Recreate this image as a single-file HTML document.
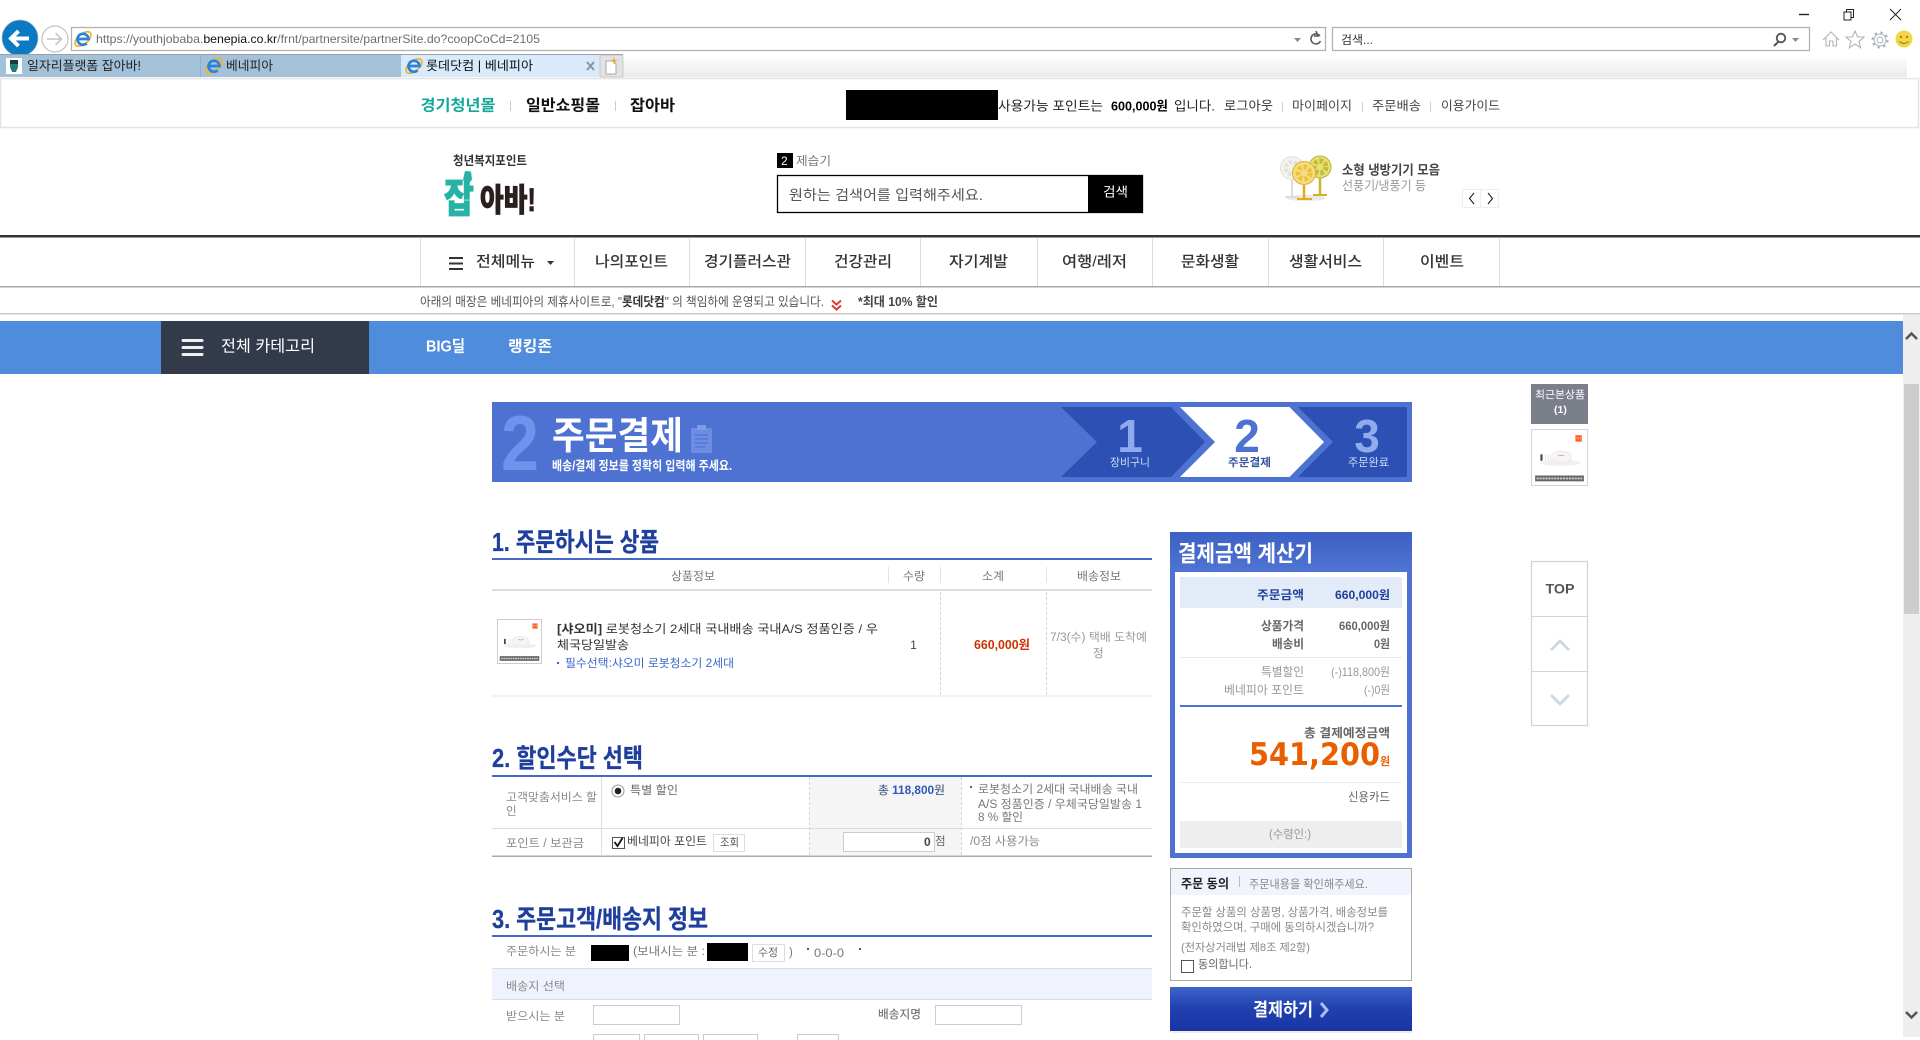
<!DOCTYPE html>
<html lang="ko"><head><meta charset="utf-8"><title>롯데닷컴 | 베네피아</title>
<style>
html,body{margin:0;padding:0;background:#fff;width:1920px;height:1040px;overflow:hidden}
svg{display:block;position:absolute;left:0;top:0}
text{font-family:"Liberation Sans","Noto Sans CJK KR",sans-serif;dominant-baseline:central;white-space:pre;transform:translateY(1px)}
</style></head><body>
<svg xmlns="http://www.w3.org/2000/svg" width="1920" height="1040" viewBox="0 0 1920 1040">
<defs>
<linearGradient id="tb" x1="0" y1="0" x2="0" y2="1"><stop offset="0" stop-color="#fff"/><stop offset="1" stop-color="#ebebeb"/></linearGradient>
<linearGradient id="hd" x1="0" y1="0" x2="0" y2="1"><stop offset="0" stop-color="#3c60c4"/><stop offset="1" stop-color="#4f74d3"/></linearGradient>
<linearGradient id="btn" x1="0" y1="0" x2="0" y2="1"><stop offset="0" stop-color="#3f65cb"/><stop offset=".45" stop-color="#2142b0"/><stop offset="1" stop-color="#1a34a5"/></linearGradient>
<g id="ie"><ellipse cx="0" cy="0" rx="9.500" ry="5" transform="rotate(-40)" fill="none" stroke="#f0b429" stroke-width="1.700"/><path d="M-5.500 0H5.500A5.500 5.500 0 1 0 3.600 4.400" fill="none" stroke="#2b83d6" stroke-width="2.700"/></g>
<g id="robot"><rect x="0" y="0" width="100" height="100" fill="#fff"/><rect x="80" y="8" width="12" height="12" fill="#ff5a1f"/><path d="M83 16v-5M86 16v-5M89 16v-5" stroke="#fff" stroke-width=".8"/><ellipse cx="52" cy="60" rx="38" ry="6" fill="#f0f0f0"/><ellipse cx="53" cy="49" rx="20" ry="11" fill="#f5f5f5" stroke="#e0e0e0"/><path d="M47 45q6 3 12 0" stroke="#e66" stroke-width="1.200" fill="none"/><rect x="14" y="44" width="4" height="12" fill="#444"/><path d="M22 45q4 5 0 10M27 44q5 6 0 12" stroke="#bcd7f0" fill="none"/><rect x="4" y="84" width="92" height="11" fill="#666"/><path d="M7 89.500H93" stroke="#ccc" stroke-width="3.500" stroke-dasharray="4 1.500"/></g>
</defs>

<!-- browser chrome -->
<rect x="0" y="0" width="1920" height="78" fill="#fff"/>
<path d="M1799 14.500h10" stroke="#222" stroke-width="1.400"/>
<rect x="1844" y="12" width="7" height="8" fill="#fff" stroke="#222"/><path d="M1846.500 12V9.500h7v8h-2.500" fill="none" stroke="#222"/>
<path d="M1890 9l11 11M1901 9l-11 11" stroke="#222" stroke-width="1"/>
<circle cx="20" cy="38" r="18" fill="#0a7ac4" stroke="#9fb6c6" stroke-width=".7"/>
<path d="M29 38.500H11M18.500 31L11 38.500L18.500 46" fill="none" stroke="#fff" stroke-width="4"/>
<circle cx="55" cy="39" r="13" fill="#fff" stroke="#c2c2c2" stroke-width="1.200"/>
<path d="M47 39h14M55.500 33l6 6l-6 6" fill="none" stroke="#c2c2c2" stroke-width="1.500"/>
<rect x="71.500" y="27.500" width="1254" height="23" fill="#fff" stroke="#b2b2b2" stroke-width="1.300"/>
<use href="#ie" x="83" y="39"/>
<text x="96" y="38" font-size="12" fill="#6e6e6e" textLength="444" lengthAdjust="spacingAndGlyphs">https://youthjobaba.<tspan fill="#111">benepia.co.kr</tspan>/frnt/partnersite/partnerSite.do?coopCoCd=2105</text>
<path d="M1294 38h7l-3.500 4z" fill="#888"/>
<path d="M1320 36a5 5 0 1 0 .5 5M1316 31l2 5h-4" fill="none" stroke="#555" stroke-width="1.500"/>
<rect x="1332.500" y="27.500" width="477" height="23" fill="#fff" stroke="#b2b2b2" stroke-width="1.300"/>
<text x="1341" y="39" font-size="12" fill="#333" textLength="32" lengthAdjust="spacingAndGlyphs">검색...</text>
<circle cx="1781" cy="38" r="4.300" fill="none" stroke="#555" stroke-width="1.800"/><path d="M1778 42l-4 4" stroke="#555" stroke-width="2"/>
<path d="M1792 38h7l-3.500 4z" fill="#888"/>
<path d="M1823 40l8-8l8 8M1826 38v8h3.500v-5h3.500v5h3.500v-8" fill="none" stroke="#aeb4b8" stroke-width="1.100"/>
<path d="M1855 31l2.700 6h6.300l-5 4.300l1.700 6.500l-5.700-3.600l-5.700 3.600l1.700-6.500l-5-4.300h6.300z" fill="none" stroke="#aeb4b8" stroke-width="1.100"/>
<circle cx="1880" cy="40" r="3" fill="none" stroke="#aeb4b8"/><circle cx="1880" cy="40" r="6" fill="none" stroke="#aeb4b8" stroke-width="1"/><circle cx="1880" cy="40" r="7.500" fill="none" stroke="#aeb4b8" stroke-width="2" stroke-dasharray="2.500 3.400"/>
<circle cx="1904" cy="39" r="8.500" fill="#f5d447"/><circle cx="1901" cy="37" r="1" fill="#7a6a1e"/><circle cx="1907" cy="37" r="1" fill="#7a6a1e"/><path d="M1899.500 41.500q4.500 4 9 0" fill="none" stroke="#8a7a22"/>

<rect x="0" y="54" width="623" height="1" fill="#9aa0a6"/>
<rect x="623" y="55" width="1284" height="22" fill="url(#tb)"/>
<rect x="0" y="55" width="401" height="22" fill="#a4c1da"/>
<rect x="200" y="55" width="1" height="22" fill="#93aec6"/>
<rect x="401" y="55" width="199" height="22" fill="#d8eafb"/>
<rect x="600" y="55" width="23" height="22" fill="#e2e2e2" stroke="#b5b5b5" stroke-width=".6"/>
<rect x="6" y="58" width="16" height="16" fill="#fff"/><path d="M10 60h8v7l-2 5h-4l-2-5z" fill="#1f7f78"/><path d="M10 60h8v4h-8z" fill="#1d3a3a"/>
<text x="27" y="65" font-size="12.500" fill="#222" textLength="114" lengthAdjust="spacingAndGlyphs">일자리플랫폼 잡아바!</text>
<use href="#ie" x="214" y="66"/>
<text x="226" y="65" font-size="12.500" fill="#222" textLength="47" lengthAdjust="spacingAndGlyphs">베네피아</text>
<use href="#ie" x="414" y="66"/>
<text x="426" y="65" font-size="12.500" fill="#111" textLength="107" lengthAdjust="spacingAndGlyphs">롯데닷컴 | 베네피아</text>
<path d="M587 62l7 8M594 62l-7 8" stroke="#8c959d" stroke-width="2"/>
<path d="M606 61h7l3 3v10h-10z" fill="#fff" stroke="#aaa"/>
<path d="M614 57l1 3l3 .5l-3 1l-1 3l-1-3l-3-1l3-.5z" fill="#f5a623"/>

<!-- top bar -->
<rect x="0.500" y="78.500" width="1918" height="49" fill="#fff" stroke="#e3e3e3" stroke-width="1.500"/>
<text x="420.500" y="105" font-size="15.500" font-weight="700" fill="#14a99b" textLength="75" lengthAdjust="spacingAndGlyphs">경기청년몰</text>
<rect x="510" y="101" width="1" height="10" fill="#ccc"/>
<text x="526" y="105" font-size="15.500" font-weight="700" fill="#111" textLength="74" lengthAdjust="spacingAndGlyphs">일반쇼핑몰</text>
<rect x="615" y="101" width="1" height="10" fill="#ccc"/>
<text x="630" y="105" font-size="15.500" font-weight="700" fill="#111" textLength="45" lengthAdjust="spacingAndGlyphs">잡아바</text>
<rect x="846" y="90" width="152" height="30" fill="#000"/>
<text x="998" y="105" font-size="13" fill="#222" textLength="105" lengthAdjust="spacingAndGlyphs">사용가능 포인트는</text>
<text x="1111" y="105" font-size="13" font-weight="700" fill="#000" textLength="57" lengthAdjust="spacingAndGlyphs">600,000원</text>
<text x="1174" y="105" font-size="13" fill="#222" textLength="41" lengthAdjust="spacingAndGlyphs">입니다.</text>
<text x="1224" y="105" font-size="12.500" fill="#333" textLength="49" lengthAdjust="spacingAndGlyphs">로그아웃</text>
<rect x="1282" y="102" width="1" height="10" fill="#ccc"/>
<text x="1292" y="105" font-size="12.500" fill="#444" textLength="60" lengthAdjust="spacingAndGlyphs">마이페이지</text>
<rect x="1362" y="102" width="1" height="10" fill="#ccc"/>
<text x="1372" y="105" font-size="12.500" fill="#444" textLength="49" lengthAdjust="spacingAndGlyphs">주문배송</text>
<rect x="1430" y="102" width="1" height="10" fill="#ccc"/>
<text x="1441" y="105" font-size="12.500" fill="#444" textLength="59" lengthAdjust="spacingAndGlyphs">이용가이드</text>

<!-- logo -->
<text x="453" y="160" font-size="12.500" font-weight="700" fill="#333" textLength="74" lengthAdjust="spacingAndGlyphs">청년복지포인트</text>
<path d="M465 171l6 .5l1 8l-3 4h-4l-2-4z" fill="#26b3a6"/>
<text x="444" y="198" font-size="40" font-weight="900" fill="#26b3a6" stroke="#26b3a6" stroke-width=".8" textLength="30" lengthAdjust="spacingAndGlyphs">잡</text>
<text x="480" y="199" font-size="32" font-weight="900" fill="#2a1f1d" stroke="#2a1f1d" stroke-width=".8" textLength="56" lengthAdjust="spacingAndGlyphs">아바!</text>

<!-- search -->
<rect x="777" y="153" width="16" height="15" fill="#000"/>
<text x="781" y="160" font-size="12" fill="#fff">2</text>
<text x="796" y="160" font-size="12" fill="#777" textLength="35" lengthAdjust="spacingAndGlyphs">제습기</text>
<rect x="777.500" y="175.500" width="365" height="37" fill="#fff" stroke="#000" stroke-width="1.300"/>
<rect x="1088" y="175" width="55" height="38" fill="#000"/>
<text x="789" y="194" font-size="14" fill="#555" textLength="194" lengthAdjust="spacingAndGlyphs">원하는 검색어를 입력해주세요.</text>
<text x="1103" y="191" font-size="13" fill="#fff" textLength="25" lengthAdjust="spacingAndGlyphs">검색</text>

<!-- fans -->
<ellipse cx="1306" cy="198" rx="20" ry="3" fill="#e9e9e9"/>
<circle cx="1292" cy="168" r="11.500" fill="#f3f3ee" stroke="#dedede"/><circle cx="1292" cy="168" r="6" fill="none" stroke="#e2e2dc" stroke-width="4" stroke-dasharray="3 2"/><path d="M1292 180v16" stroke="#ddd" stroke-width="2"/><path d="M1285 197h14" stroke="#ddd" stroke-width="2"/>
<circle cx="1320" cy="167" r="11" fill="#e4e07a" stroke="#b8b53a"/><circle cx="1320" cy="167" r="6" fill="none" stroke="#c4bd30" stroke-width="5" stroke-dasharray="3.500 2"/><path d="M1320 178v17" stroke="#c9b42a" stroke-width="2.500"/><path d="M1313 195h14" stroke="#c9b42a" stroke-width="2"/>
<circle cx="1304" cy="173" r="11.500" fill="#f6dc84" stroke="#e0b030"/><circle cx="1304" cy="173" r="6" fill="none" stroke="#eec23a" stroke-width="5" stroke-dasharray="3.500 2"/><path d="M1304 185v14" stroke="#e2ac1e" stroke-width="2.500"/><path d="M1297 199h15" stroke="#e2ac1e" stroke-width="2"/>
<text x="1342" y="169" font-size="13" font-weight="700" fill="#444" textLength="98" lengthAdjust="spacingAndGlyphs">소형 냉방기기 모음</text>
<text x="1342" y="185" font-size="12.500" fill="#999" textLength="84" lengthAdjust="spacingAndGlyphs">선풍기/냉풍기 등</text>
<rect x="1462.500" y="189.500" width="36" height="18" fill="#fff" stroke="#eee"/><rect x="1480" y="190" width="1" height="17" fill="#eee"/>
<path d="M1474 193l-4.500 5.500l4.500 5.500M1488 193l4.500 5.500l-4.500 5.500" fill="none" stroke="#222" stroke-width="1.100"/>

<!-- nav -->
<rect x="0" y="235" width="1920" height="2.500" fill="#333"/>
<rect x="0" y="286" width="1920" height="1.500" fill="#aaa"/>
<g fill="#ddd"><rect x="420" y="238" width="1" height="48"/><rect x="574" y="238" width="1" height="48"/><rect x="689" y="238" width="1" height="48"/><rect x="805" y="238" width="1" height="48"/><rect x="920" y="238" width="1" height="48"/><rect x="1037" y="238" width="1" height="48"/><rect x="1152" y="238" width="1" height="48"/><rect x="1268" y="238" width="1" height="48"/><rect x="1383" y="238" width="1" height="48"/><rect x="1499" y="238" width="1" height="48"/></g>
<path d="M449 258h14M449 263.500h14M449 269h14" stroke="#333" stroke-width="2"/>
<text x="476" y="261" font-size="15" font-weight="500" fill="#333" textLength="59" lengthAdjust="spacingAndGlyphs">전체메뉴</text>
<path d="M547 261h7l-3.500 4z" fill="#333"/>
<g font-size="15" font-weight="500" fill="#333">
<text x="595" y="261" textLength="73" lengthAdjust="spacingAndGlyphs">나의포인트</text>
<text x="704" y="261" textLength="87" lengthAdjust="spacingAndGlyphs">경기플러스관</text>
<text x="834" y="261" textLength="58" lengthAdjust="spacingAndGlyphs">건강관리</text>
<text x="949" y="261" textLength="59" lengthAdjust="spacingAndGlyphs">자기계발</text>
<text x="1062" y="261" textLength="65" lengthAdjust="spacingAndGlyphs">여행/레저</text>
<text x="1181" y="261" textLength="58" lengthAdjust="spacingAndGlyphs">문화생활</text>
<text x="1289" y="261" textLength="73" lengthAdjust="spacingAndGlyphs">생활서비스</text>
<text x="1420" y="261" textLength="44" lengthAdjust="spacingAndGlyphs">이벤트</text>
</g>

<!-- notice -->
<text x="420" y="301" font-size="12.500" fill="#555" textLength="404" lengthAdjust="spacingAndGlyphs">아래의 매장은 베네피아의 제휴사이트로, "<tspan font-weight="700" fill="#333">롯데닷컴</tspan>" 의 책임하에 운영되고 있습니다.</text>
<path d="M832 300.500l4.500 4l4.500-4M832 305.500l4.500 4l4.500-4" fill="none" stroke="#e03a2f" stroke-width="2"/>
<text x="858" y="301" font-size="12.500" font-weight="700" fill="#444" textLength="80" lengthAdjust="spacingAndGlyphs">*최대 10% 할인</text>
<rect x="0" y="313" width="1920" height="1.500" fill="#cfc8c0"/>

<!-- category bar -->
<rect x="0" y="321" width="1903" height="53" fill="#4f8cdc"/>
<rect x="161" y="321" width="208" height="53" fill="#333a4a"/>
<path d="M183 340.500h19M183 347.500h19M183 354.500h19" stroke="#eef0f2" stroke-width="3" stroke-linecap="round"/>
<text x="221" y="346" font-size="16" fill="#fff" textLength="94" lengthAdjust="spacingAndGlyphs">전체 카테고리</text>
<text x="426" y="346" font-size="16" font-weight="700" fill="#fff" textLength="39" lengthAdjust="spacingAndGlyphs">BIG딜</text>
<text x="508" y="346" font-size="15.500" font-weight="700" fill="#fff" textLength="44" lengthAdjust="spacingAndGlyphs">랭킹존</text>

<!-- scrollbar -->
<rect x="1903" y="315" width="17" height="722" fill="#eeeeee"/>
<rect x="1904" y="384" width="15" height="230" fill="#cdcdcd"/>
<path d="M1906 339l5.500-5.500l5.500 5.500" fill="none" stroke="#555" stroke-width="2.500"/>
<path d="M1906 1012l5.500 5.500l5.500-5.500" fill="none" stroke="#555" stroke-width="2.500"/>

<!-- order banner -->
<rect x="492" y="402" width="920" height="80" fill="#4d72d1"/>
<text x="501" y="442" font-size="78" font-weight="700" fill="#6f92ec" textLength="38" lengthAdjust="spacingAndGlyphs">2</text>
<text x="552" y="436" font-size="38" font-weight="700" fill="#fff" textLength="131" lengthAdjust="spacingAndGlyphs">주문결제</text>
<rect x="691" y="428" width="21" height="25" rx="1" fill="#6d8de2"/><rect x="697" y="425" width="9" height="5" fill="#7f9ce8"/><path d="M695 435h13M695 439h13M695 443h13M695 447h10" stroke="#4d72d1" stroke-width="1.200"/>
<text x="552" y="465" font-size="12.500" font-weight="700" fill="#fff" textLength="180" lengthAdjust="spacingAndGlyphs">배송/결제 정보를 정확히 입력해 주세요.</text>
<path d="M1061 407H1171L1205 442L1171 477H1061L1097 442Z" fill="#2c50b3"/>
<path d="M1180 407H1289.500L1324 442L1289.500 477H1180L1215 442Z" fill="#fff"/>
<path d="M1298 407H1407V477H1298L1333 442Z" fill="#2c50b3"/>
<text x="1130" y="435" font-size="46" font-weight="700" fill="#8fabee" text-anchor="middle">1</text>
<text x="1247" y="435" font-size="46" font-weight="700" fill="#4d72d1" text-anchor="middle">2</text>
<text x="1367" y="435" font-size="46" font-weight="700" fill="#8fabee" text-anchor="middle">3</text>
<text x="1110" y="462" font-size="11" fill="#cfdcf8" textLength="40" lengthAdjust="spacingAndGlyphs">장비구니</text>
<text x="1228" y="462" font-size="11" font-weight="700" fill="#33539f" textLength="43" lengthAdjust="spacingAndGlyphs">주문결제</text>
<text x="1348" y="462" font-size="11" fill="#cfdcf8" textLength="41" lengthAdjust="spacingAndGlyphs">주문완료</text>

<!-- section 1 -->
<text x="492" y="542" font-size="25.500" font-weight="700" fill="#1f3f9c" stroke="#1f3f9c" stroke-width=".3" textLength="167" lengthAdjust="spacingAndGlyphs">1. 주문하시는 상품</text>
<rect x="492" y="558" width="660" height="2" fill="#4668c8"/>
<g font-size="11.500" fill="#777">
<text x="671" y="576" textLength="44" lengthAdjust="spacingAndGlyphs">상품정보</text>
<text x="903" y="576" textLength="22" lengthAdjust="spacingAndGlyphs">수량</text>
<text x="982" y="576" textLength="22" lengthAdjust="spacingAndGlyphs">소계</text>
<text x="1077" y="576" textLength="44" lengthAdjust="spacingAndGlyphs">배송정보</text>
</g>
<g fill="#e2e2e2"><rect x="888" y="567" width="1" height="16"/><rect x="940" y="567" width="1" height="16"/><rect x="1046" y="567" width="1" height="16"/></g>
<rect x="492" y="589" width="660" height="2" fill="#dedede"/>
<path d="M940.500 592V695M1046.500 592V695" stroke="#d5d5d5" stroke-dasharray="3 2"/>
<rect x="492" y="695.500" width="660" height="1" fill="#e5e5e5"/>
<rect x="497.500" y="619.500" width="44" height="44" fill="#fff" stroke="#ccc"/>
<svg x="498" y="620" width="43" height="43" viewBox="0 0 100 100"><use href="#robot"/></svg>
<text x="557" y="628" font-size="12" fill="#333" textLength="321" lengthAdjust="spacingAndGlyphs"><tspan font-weight="700">[샤오미]</tspan> 로봇청소기 2세대 국내배송 국내A/S 정품인증 / 우</text>
<text x="557" y="644" font-size="12" fill="#333" textLength="72" lengthAdjust="spacingAndGlyphs">체국당일발송</text>
<rect x="557" y="662" width="2" height="2" fill="#3a66d0"/>
<text x="565" y="663" font-size="11.500" fill="#3a66d0" textLength="169" lengthAdjust="spacingAndGlyphs">필수선택:샤오미 로봇청소기 2세대</text>
<text x="913.500" y="644" font-size="12" fill="#444" text-anchor="middle">1</text>
<text x="974" y="644" font-size="12.500" font-weight="700" fill="#cc3300" textLength="56" lengthAdjust="spacingAndGlyphs">660,000원</text>
<text x="1050" y="637" font-size="11.500" fill="#999" textLength="97" lengthAdjust="spacingAndGlyphs">7/3(수) 택배 도착예</text>
<text x="1093" y="653" font-size="11.500" fill="#999">정</text>

<!-- section 2 -->
<text x="492" y="758" font-size="25.500" font-weight="700" fill="#1f3f9c" stroke="#1f3f9c" stroke-width=".3" textLength="151" lengthAdjust="spacingAndGlyphs">2. 할인수단 선택</text>
<rect x="492" y="775" width="660" height="2" fill="#4668c8"/>
<rect x="810" y="777" width="151" height="78" fill="#f5f5f5"/>
<rect x="492" y="828" width="660" height="1" fill="#ddd"/>
<rect x="492" y="855.500" width="660" height="1.500" fill="#aaa"/>
<rect x="601" y="777" width="1" height="79" fill="#ddd"/>
<path d="M809.500 777V855M961.500 777V855" stroke="#d5d5d5" stroke-dasharray="3 2"/>
<text x="506" y="797" font-size="11.500" fill="#888" textLength="91" lengthAdjust="spacingAndGlyphs">고객맞춤서비스 할</text>
<text x="506" y="811" font-size="11.500" fill="#888">인</text>
<circle cx="618" cy="791" r="6" fill="#fff" stroke="#999"/><circle cx="618" cy="791" r="3.300" fill="#222"/>
<text x="630" y="790" font-size="11.500" fill="#666" textLength="48" lengthAdjust="spacingAndGlyphs">특별 할인</text>
<text x="878" y="790" font-size="11.500" font-weight="500" fill="#5a6a8c" textLength="67" lengthAdjust="spacingAndGlyphs">총 <tspan fill="#2f57bb" font-weight="700">118,800</tspan>원</text>
<rect x="970" y="786" width="2" height="2" fill="#666"/>
<text x="978" y="789" font-size="11.500" fill="#777" textLength="160" lengthAdjust="spacingAndGlyphs">로봇청소기 2세대 국내배송 국내</text>
<text x="978" y="804" font-size="11.500" fill="#777" textLength="164" lengthAdjust="spacingAndGlyphs">A/S 정품인증 / 우체국당일발송 1</text>
<text x="978" y="817" font-size="11.500" fill="#777" textLength="45" lengthAdjust="spacingAndGlyphs">8 % 할인</text>
<text x="506" y="843" font-size="11.500" fill="#888" textLength="78" lengthAdjust="spacingAndGlyphs">포인트 / 보관금</text>
<rect x="612.500" y="837.500" width="12" height="11" fill="#fff" stroke="#555"/>
<path d="M614.500 842l3 4l5-8" fill="none" stroke="#111" stroke-width="1.800"/>
<text x="627" y="841" font-size="11.500" fill="#444" textLength="80" lengthAdjust="spacingAndGlyphs">베네피아 포인트</text>
<rect x="713.500" y="834.500" width="31" height="17" fill="#fff" stroke="#ddd"/>
<text x="720" y="842" font-size="11" fill="#555" textLength="19" lengthAdjust="spacingAndGlyphs">조회</text>
<rect x="843.500" y="832.500" width="91" height="19" fill="#fff" stroke="#ccc"/>
<text x="924" y="841" font-size="12" font-weight="700" fill="#444">0</text>
<text x="935" y="841" font-size="11.500" fill="#666">점</text>
<text x="970" y="841" font-size="11.500" fill="#888" textLength="70" lengthAdjust="spacingAndGlyphs">/0점 사용가능</text>

<!-- section 3 -->
<text x="492" y="919" font-size="25.500" font-weight="700" fill="#1f3f9c" stroke="#1f3f9c" stroke-width=".3" textLength="216" lengthAdjust="spacingAndGlyphs">3. 주문고객/배송지 정보</text>
<rect x="492" y="935" width="660" height="2" fill="#4668c8"/>
<text x="506" y="951" font-size="11.500" fill="#888" textLength="70" lengthAdjust="spacingAndGlyphs">주문하시는 분</text>
<rect x="591" y="945" width="38" height="16" fill="#000"/>
<text x="633" y="951" font-size="11.500" fill="#777" textLength="72" lengthAdjust="spacingAndGlyphs">(보내시는 분 :</text>
<rect x="707" y="943" width="41" height="18" fill="#000"/>
<rect x="752.500" y="944.500" width="32" height="17" fill="#fff" stroke="#ddd"/>
<text x="758" y="952" font-size="11" fill="#666" textLength="20" lengthAdjust="spacingAndGlyphs">수정</text>
<text x="789" y="952" font-size="11.500" fill="#777">)</text>
<rect x="807" y="948" width="2" height="2" fill="#555"/>
<text x="814" y="952" font-size="12" fill="#777" textLength="30" lengthAdjust="spacingAndGlyphs">0-0-0</text>
<rect x="859" y="948" width="2" height="2" fill="#555"/>
<rect x="492" y="968" width="660" height="32" fill="#f0f3fd"/>
<rect x="492" y="968" width="660" height="1" fill="#d3ddf2"/><rect x="492" y="999" width="660" height="1" fill="#d3ddf2"/>
<text x="506" y="986" font-size="11.500" fill="#888" textLength="59" lengthAdjust="spacingAndGlyphs">배송지 선택</text>
<text x="506" y="1016" font-size="11.500" fill="#888" textLength="59" lengthAdjust="spacingAndGlyphs">받으시는 분</text>
<rect x="593.500" y="1005.500" width="86" height="19" fill="#fff" stroke="#ccc"/>
<text x="878" y="1014" font-size="11.500" font-weight="500" fill="#777" textLength="43" lengthAdjust="spacingAndGlyphs">배송지명</text>
<rect x="935.500" y="1005.500" width="86" height="19" fill="#fff" stroke="#ccc"/>
<g fill="#fff" stroke="#ccc"><rect x="593.500" y="1034.500" width="46" height="10"/><rect x="644.500" y="1034.500" width="54" height="10"/><rect x="703.500" y="1034.500" width="54" height="10"/><rect x="797.500" y="1034.500" width="41" height="10"/></g>

<!-- calculator -->
<rect x="1170" y="532" width="242" height="326" fill="#4e72d2"/>
<rect x="1170" y="532" width="242" height="40" fill="url(#hd)"/>
<text x="1178" y="553" font-size="22.500" font-weight="700" fill="#fff" textLength="135" lengthAdjust="spacingAndGlyphs">결제금액 계산기</text>
<rect x="1175" y="572" width="232" height="281" fill="#fff"/>
<rect x="1180" y="577" width="222" height="31" fill="#e3eaf8"/>
<text x="1257" y="594" font-size="12" font-weight="700" fill="#1f3f9c" textLength="47" lengthAdjust="spacingAndGlyphs">주문금액</text>
<text x="1335" y="594" font-size="12" font-weight="700" fill="#1f3f9c" textLength="55" lengthAdjust="spacingAndGlyphs">660,000원</text>
<text x="1261" y="625" font-size="12" font-weight="700" fill="#666" textLength="43" lengthAdjust="spacingAndGlyphs">상품가격</text>
<text x="1339" y="625" font-size="12" font-weight="700" fill="#666" textLength="51" lengthAdjust="spacingAndGlyphs">660,000원</text>
<text x="1272" y="643" font-size="12" font-weight="700" fill="#666" textLength="32" lengthAdjust="spacingAndGlyphs">배송비</text>
<text x="1374" y="643" font-size="12" font-weight="700" fill="#666" textLength="16" lengthAdjust="spacingAndGlyphs">0원</text>
<rect x="1180" y="657" width="222" height="1" fill="#e8e8e8"/>
<text x="1261" y="671" font-size="12" fill="#999" textLength="43" lengthAdjust="spacingAndGlyphs">특별할인</text>
<text x="1331" y="671" font-size="12" fill="#999" textLength="59" lengthAdjust="spacingAndGlyphs">(-)118,800원</text>
<text x="1224" y="689" font-size="12" fill="#999" textLength="80" lengthAdjust="spacingAndGlyphs">베네피아 포인트</text>
<text x="1364" y="689" font-size="12" fill="#999" textLength="26" lengthAdjust="spacingAndGlyphs">(-)0원</text>
<rect x="1180" y="705" width="222" height="2" fill="#4e72d2"/>
<text x="1304" y="732" font-size="12" font-weight="700" fill="#666" textLength="86" lengthAdjust="spacingAndGlyphs">총 결제예정금액</text>
<text x="1249" y="754" font-size="31" font-weight="700" fill="#e95f00" textLength="131" lengthAdjust="spacingAndGlyphs" style="font-family:'DejaVu Sans',sans-serif">541,200</text>
<text x="1380" y="761" font-size="11" font-weight="700" fill="#e95f00">원</text>
<rect x="1180" y="782" width="222" height="1" fill="#eee"/>
<text x="1348" y="796" font-size="12" fill="#666" textLength="42" lengthAdjust="spacingAndGlyphs">신용카드</text>
<rect x="1180" y="821" width="222" height="27" fill="#eeeeee"/>
<text x="1269" y="834" font-size="11.500" fill="#999" textLength="42" lengthAdjust="spacingAndGlyphs">(수령인:)</text>

<!-- agreement -->
<rect x="1170.500" y="868.500" width="241" height="112" fill="#fff" stroke="#aaa"/>
<rect x="1171" y="869" width="240" height="26" fill="#f2f4fd"/>
<text x="1181" y="883" font-size="12.500" font-weight="700" fill="#222" textLength="48" lengthAdjust="spacingAndGlyphs">주문 동의</text>
<rect x="1239" y="876" width="1" height="11" fill="#bbb"/>
<text x="1249" y="884" font-size="11.500" fill="#888" textLength="119" lengthAdjust="spacingAndGlyphs">주문내용을 확인해주세요.</text>
<text x="1181" y="912" font-size="11.500" fill="#888" textLength="207" lengthAdjust="spacingAndGlyphs">주문할 상품의 상품명, 상품가격, 배송정보를</text>
<text x="1181" y="927" font-size="11.500" fill="#888" textLength="193" lengthAdjust="spacingAndGlyphs">확인하였으며, 구매에 동의하시겠습니까?</text>
<text x="1181" y="947" font-size="11" fill="#888" textLength="129" lengthAdjust="spacingAndGlyphs">(전자상거래법 제8조 제2항)</text>
<rect x="1181.500" y="960.500" width="12" height="12" fill="#fff" stroke="#555"/>
<text x="1198" y="964" font-size="11.500" fill="#666" textLength="54" lengthAdjust="spacingAndGlyphs">동의합니다.</text>

<rect x="1170" y="987" width="242" height="44" fill="url(#btn)"/>
<rect x="1170" y="1031" width="242" height="2" fill="#eee"/>
<text x="1253" y="1009" font-size="18" font-weight="700" fill="#fff" textLength="60" lengthAdjust="spacingAndGlyphs">결제하기</text>
<path d="M1321 1003l6 7l-6 7" fill="none" stroke="#a8bdf0" stroke-width="3"/>

<!-- right rail -->
<rect x="1531" y="384" width="57" height="40" fill="#7a7f8a"/>
<text x="1535" y="394" font-size="10.500" fill="#fff" textLength="50" lengthAdjust="spacingAndGlyphs">최근본상품</text>
<text x="1554" y="409" font-size="10.500" font-weight="700" fill="#fff">(1)</text>
<rect x="1531.500" y="429.500" width="56" height="56" fill="#fff" stroke="#cfd6dc"/>
<svg x="1533" y="431" width="53" height="53" viewBox="0 0 100 100"><use href="#robot"/></svg>
<rect x="1531.500" y="561.500" width="56" height="164" fill="#fff" stroke="#ccd6dc" stroke-width="1.300"/>
<rect x="1531" y="616" width="57" height="1" fill="#ccd6dc"/><rect x="1531" y="671" width="57" height="1" fill="#ccd6dc"/>
<text x="1545.500" y="588" font-size="13.500" font-weight="700" fill="#555" textLength="29" lengthAdjust="spacingAndGlyphs">TOP</text>
<path d="M1551 650l9-9l9 9" fill="none" stroke="#ccd8de" stroke-width="2.800"/>
<path d="M1551 695l9 9l9-9" fill="none" stroke="#ccd8de" stroke-width="2.800"/>
</svg>
</body></html>
